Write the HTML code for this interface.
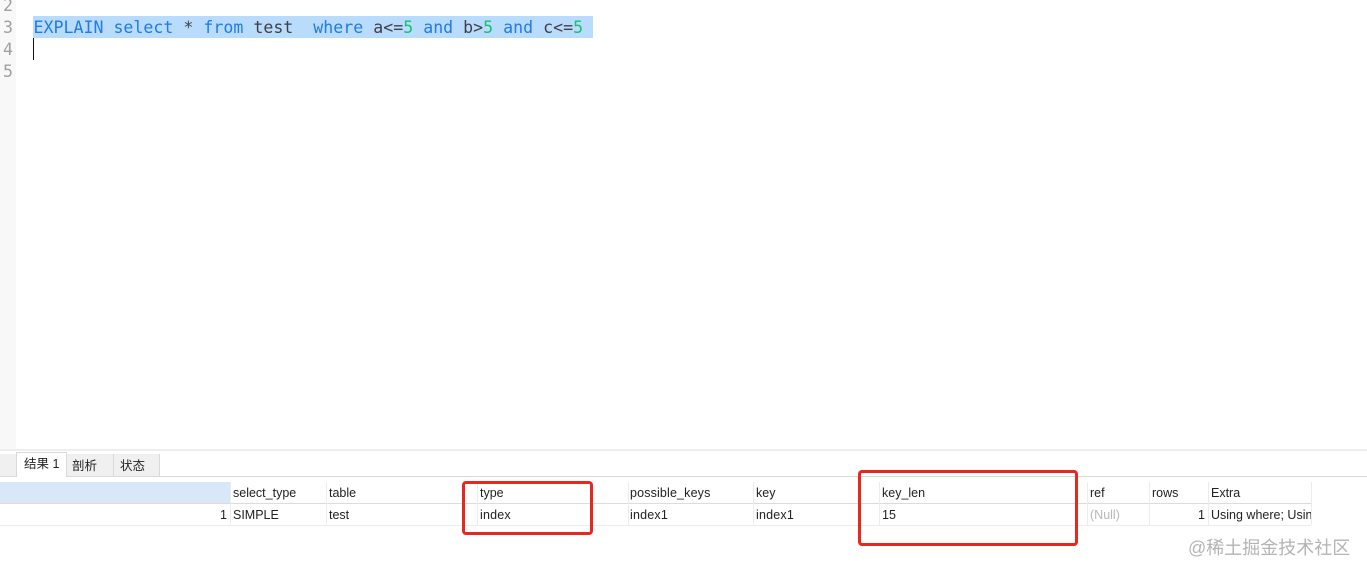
<!DOCTYPE html>
<html><head><meta charset="utf-8">
<style>
html,body{margin:0;padding:0;background:#fff;}
#p{position:relative;width:1367px;height:577px;overflow:hidden;background:#fff;font-family:"Liberation Sans","Noto Sans CJK SC",sans-serif;}
#p div{position:absolute;}
.ln{left:3px;font:16.6px/22px "DejaVu Sans Mono",monospace;color:#a0a0a0;white-space:pre;}
.code{left:33.5px;top:17px;font:16.6px/22px "DejaVu Sans Mono",monospace;color:#3f3f46;white-space:pre;}
.k{color:#1f7ce8}.n{color:#17c26f}
.t{font-size:12.5px;line-height:16px;color:#222;white-space:pre;}
.v{width:1px;background:#ececec;}
.h{background:#e2e2e2;height:1px;}
.tab{font-size:12.5px;line-height:16px;color:#222;white-space:pre;}
.red{border:3px solid #e8281f;border-radius:4px;box-sizing:border-box;}
</style></head><body>
<div id="p">
<div style="left:0;top:0;width:16px;height:449px;background:#f8f8f8"></div>
<div class="ln" style="top:-5px">2</div>
<div class="ln" style="top:17px">3</div>
<div class="ln" style="top:39px">4</div>
<div class="ln" style="top:61px">5</div>
<div style="left:33px;top:16px;width:560px;height:22px;background:#b9dcfd"></div>
<div style="left:33px;top:38px;width:1px;height:22px;background:#111"></div>
<div class="code"><span class="k">EXPLAIN</span> <span class="k">select</span> * <span class="k">from</span> test  <span class="k">where</span> a&lt;=<span class="n">5</span> <span class="k">and</span> b&gt;<span class="n">5</span> <span class="k">and</span> c&lt;=<span class="n">5</span></div>

<div style="left:0;top:449px;width:1367px;height:2px;background:#eeeeee"></div>
<div style="left:0;top:454px;width:16px;height:22px;background:#f0f0f0"></div>
<div style="left:16px;top:452px;width:51px;height:25px;background:#fff;border:1px solid #d9d9d9;border-bottom:0;box-sizing:border-box;z-index:2"></div>
<div style="left:67px;top:454px;width:47px;height:22px;background:#f0f0f0;border-right:1px solid #d9d9d9;box-sizing:border-box"></div>
<div style="left:114px;top:454px;width:46px;height:22px;background:#f0f0f0;border-right:1px solid #d9d9d9;box-sizing:border-box"></div>
<div class="h" style="left:0;top:476px;width:1367px;background:#d9d9d9"></div>
<div class="tab" style="left:24px;top:456px;z-index:3">结果 1</div>
<div class="tab" style="left:72px;top:458px">剖析</div>
<div class="tab" style="left:120px;top:458px">状态</div>

<div style="left:0;top:482px;width:230px;height:21px;background:#d8e8f8"></div>
<div class="h" style="left:0;top:503px;width:1311px;background:#dcdcdc"></div>
<div class="h" style="left:0;top:525px;width:1311px;background:#ececec"></div>

<div class="v" style="left:230px;top:482px;height:43px"></div>
<div class="v" style="left:326px;top:482px;height:43px"></div>
<div class="v" style="left:477px;top:482px;height:43px"></div>
<div class="v" style="left:628px;top:482px;height:43px"></div>
<div class="v" style="left:753px;top:482px;height:43px"></div>
<div class="v" style="left:879px;top:482px;height:43px"></div>
<div class="v" style="left:1087px;top:482px;height:43px"></div>
<div class="v" style="left:1149px;top:482px;height:43px"></div>
<div class="v" style="left:1208px;top:482px;height:43px"></div>
<div class="v" style="left:1311px;top:482px;height:43px"></div>

<div class="t" style="left:233px;top:485px">select_type</div>
<div class="t" style="left:329px;top:485px">table</div>
<div class="t" style="left:480px;top:485px">type</div>
<div class="t" style="left:630px;top:485px;letter-spacing:.15px">possible_keys</div>
<div class="t" style="left:756px;top:485px">key</div>
<div class="t" style="left:882px;top:485px">key_len</div>
<div class="t" style="left:1090px;top:485px">ref</div>
<div class="t" style="left:1152px;top:485px">rows</div>
<div class="t" style="left:1211px;top:485px">Extra</div>

<div class="t" style="left:220px;top:507px">1</div>
<div class="t" style="left:233px;top:507px">SIMPLE</div>
<div class="t" style="left:329px;top:507px">test</div>
<div class="t" style="left:480px;top:507px;letter-spacing:.2px">index</div>
<div class="t" style="left:630px;top:507px;letter-spacing:.2px">index1</div>
<div class="t" style="left:756px;top:507px;letter-spacing:.2px">index1</div>
<div class="t" style="left:882px;top:507px">15</div>
<div class="t" style="left:1090px;top:507px;color:#b8b8b8">(Null)</div>
<div class="t" style="left:1198px;top:507px">1</div>
<div class="t" style="left:1211px;top:507px;width:100px;overflow:hidden">Using where; Using index</div>

<div class="red" style="left:462px;top:481px;width:131px;height:54px"></div>
<div class="red" style="left:858px;top:470px;width:220px;height:76px"></div>

<div style="left:1188px;top:536px;font-size:18px;line-height:24px;color:#b4b4b4;white-space:pre">@稀土掘金技术社区</div>
</div>
</body></html>
